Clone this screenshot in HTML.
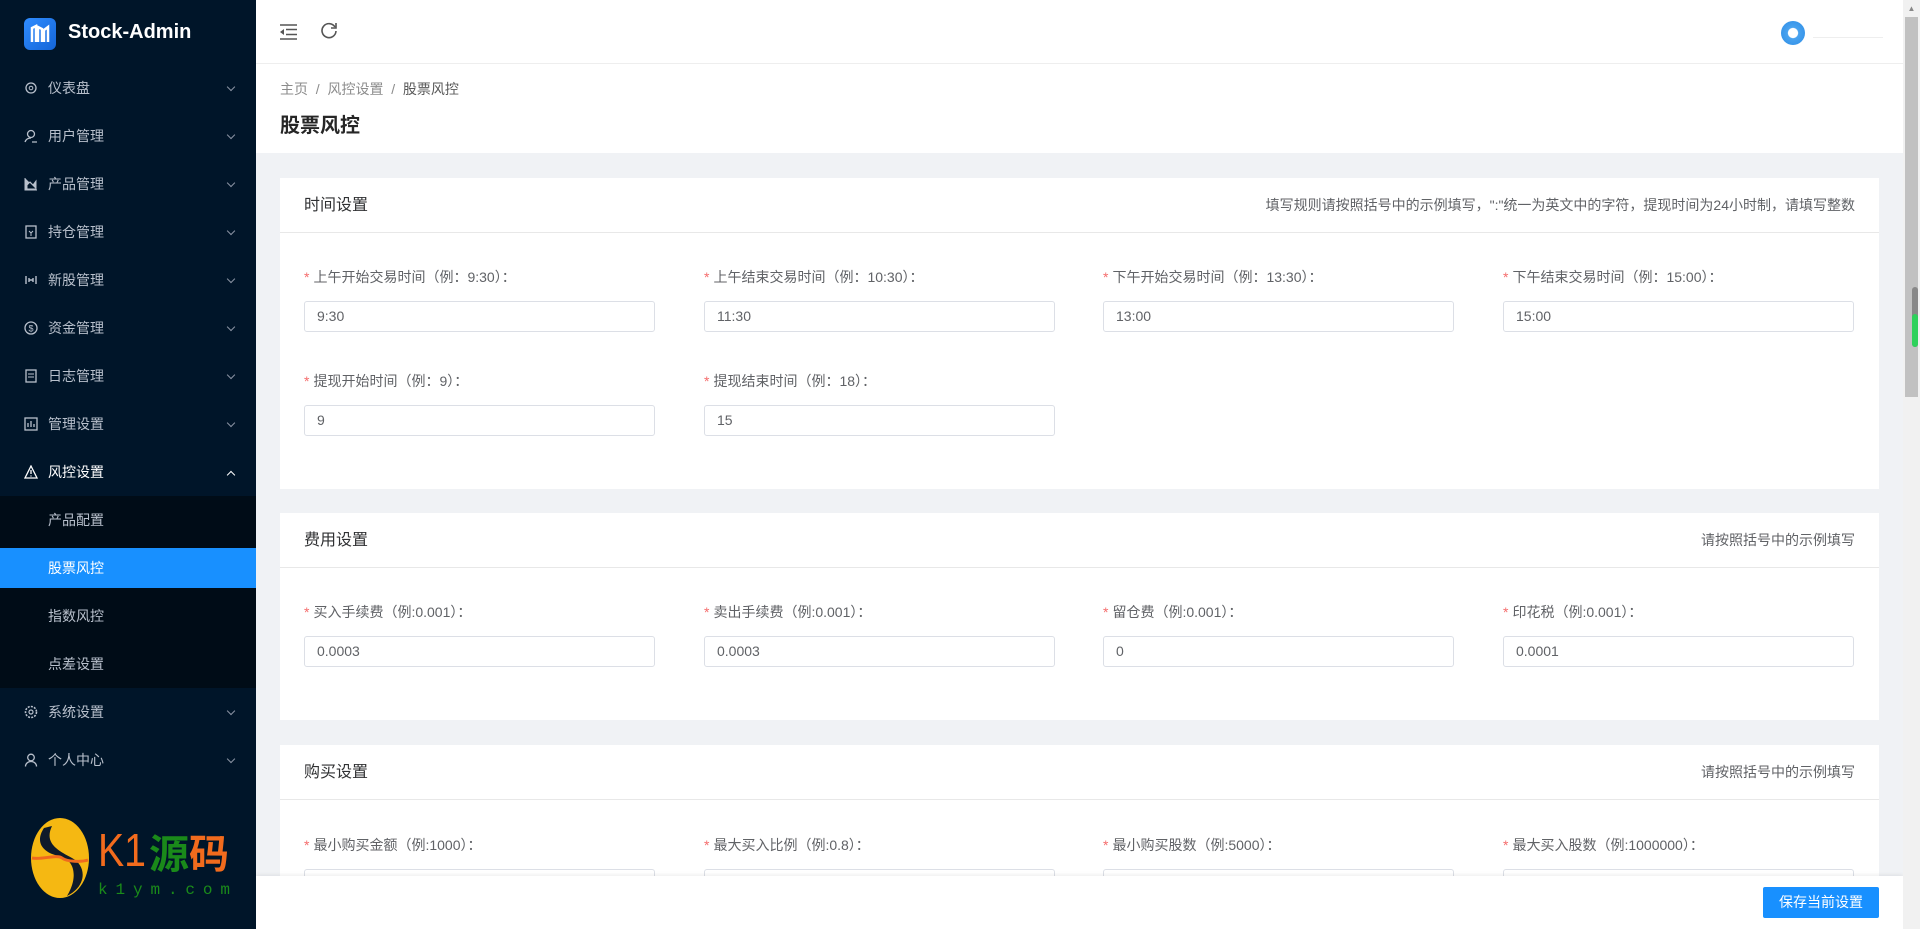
<!DOCTYPE html>
<html><head><meta charset="utf-8"><style>
*{box-sizing:border-box;margin:0;padding:0}
html,body{width:1920px;height:929px;overflow:hidden}
body{font-family:"Liberation Sans","Noto Sans CJK SC",sans-serif;background:#f0f2f5;position:relative}
.side{position:absolute;left:0;top:0;width:256px;height:929px;background:#001529;color:#b8c0cc;font-size:14px}
.logo{position:absolute;left:24px;top:18px;width:32px;height:32px;border-radius:6px;background:linear-gradient(135deg,#2f8cff,#1465d8)}
.brand{position:absolute;left:68px;top:21px;color:#fff;font-weight:bold;font-size:20px}
.mi{position:absolute;left:0;width:256px;height:48px;line-height:48px}
.mi .ic{position:absolute;left:24px;top:17px;width:14px;height:14px}
.mi .t{position:absolute;left:48px}
.mi .ar{position:absolute;left:228px;top:20px;width:6px;height:6px;border-right:1.5px solid #8a93a3;border-bottom:1.5px solid #8a93a3;transform:rotate(45deg)}
.sub{position:absolute;left:0;top:496px;width:256px;height:192px;background:#000c17}
.act{position:absolute;left:0;top:548px;width:256px;height:40px;background:#1890ff}
.hdr{position:absolute;left:256px;top:0;width:1647px;height:64px;background:#fff;border-bottom:1px solid #eee}
.ph{position:absolute;left:256px;top:64px;width:1647px;height:89px;background:#fff}
.bc{position:absolute;left:280px;top:79px;font-size:14px;color:#8c8c8c}
.bc b{font-weight:normal;color:#595959}
.ttl{position:absolute;left:280px;top:109px;font-size:20px;font-weight:bold;color:#262626}
.card{position:absolute;left:280px;width:1599px;background:#fff;overflow:hidden}
.card .h{height:55px;border-bottom:1px solid #e8e8e8;padding-left:24px;line-height:55px;font-size:16px;color:#303133;position:relative}
.card .h span{position:absolute;right:24px;top:0;font-size:14px;color:#606266}
.f{position:absolute;width:351px}
.f label{display:block;font-size:14px;color:#606266;height:20px;line-height:20px}
.f label i{color:#f56c6c;font-style:normal;margin-right:4px}
.f .in{margin-top:14px;height:31px;border:1px solid #dcdfe6;border-radius:3px;padding-left:12px;line-height:29px;font-size:14px;color:#606266;background:#fff}
.foot{position:absolute;left:256px;top:876px;width:1647px;height:53px;background:#fff;box-shadow:0 -1px 4px rgba(0,0,0,.08)}
.btn{position:absolute;left:1763px;top:887px;width:116px;height:31px;background:#1890ff;color:#fff;font-size:14px;text-align:center;line-height:31px;border-radius:2px}
.sb{position:absolute;left:1903px;top:0;width:17px;height:929px;background:#f1f1f1}
</style></head><body>
<div class="side">
<div class="logo"><svg width="32" height="32" viewBox="0 0 32 32"><path d="M8 24V10l4-2v16M14 24V9l4 2v13M20 24V12l4-3v15" stroke="#fff" stroke-width="2.5" fill="none"/></svg></div>
<div class="brand">Stock-Admin</div>
<div class="mi" style="top:64px"><svg class="ic" viewBox="0 0 14 14"><circle cx="7" cy="7" r="5" fill="none" stroke="#b8c0cc" stroke-width="1.3"/><circle cx="7" cy="7" r="1.8" fill="none" stroke="#b8c0cc"/></svg><span class="t">仪表盘</span><i class="ar"></i></div>
<div class="mi" style="top:112px"><svg class="ic" viewBox="0 0 14 14"><circle cx="7" cy="5" r="3.5" fill="none" stroke="#b8c0cc" stroke-width="1.3"/><path d="M1 13c1-3 3-4 6-4M8 13h5" stroke="#b8c0cc" stroke-width="1.3" fill="none"/></svg><span class="t">用户管理</span><i class="ar"></i></div>
<div class="mi" style="top:160px"><svg class="ic" viewBox="0 0 14 14"><path d="M1 1v12h12M3 12V8l3-3 3 3 3-4v8z" fill="#b8c0cc" stroke="#b8c0cc"/></svg><span class="t">产品管理</span><i class="ar"></i></div>
<div class="mi" style="top:208px"><svg class="ic" viewBox="0 0 14 14"><rect x="2" y="1" width="10" height="12" fill="none" stroke="#b8c0cc" stroke-width="1.3"/><path d="M5 6l2 2 2-2M7 8v3" stroke="#b8c0cc" fill="none"/></svg><span class="t">持仓管理</span><i class="ar"></i></div>
<div class="mi" style="top:256px"><svg class="ic" viewBox="0 0 14 14"><path d="M2 3v8M5 5v4M9 5v4M12 3v8M5 7h4" stroke="#b8c0cc" stroke-width="1.4"/></svg><span class="t">新股管理</span><i class="ar"></i></div>
<div class="mi" style="top:304px"><svg class="ic" viewBox="0 0 14 14"><circle cx="7" cy="7" r="6" fill="none" stroke="#b8c0cc" stroke-width="1.3"/><text x="7" y="10.5" font-size="9" fill="#b8c0cc" text-anchor="middle">$</text></svg><span class="t">资金管理</span><i class="ar"></i></div>
<div class="mi" style="top:352px"><svg class="ic" viewBox="0 0 14 14"><rect x="2" y="1" width="10" height="12" fill="none" stroke="#b8c0cc" stroke-width="1.3"/><path d="M4 5h6M4 8h6" stroke="#b8c0cc"/></svg><span class="t">日志管理</span><i class="ar"></i></div>
<div class="mi" style="top:400px"><svg class="ic" viewBox="0 0 14 14"><rect x="1" y="1" width="12" height="12" fill="none" stroke="#b8c0cc" stroke-width="1.3"/><path d="M4 10V6M7 10V4M10 10V7" stroke="#b8c0cc" stroke-width="1.3"/></svg><span class="t">管理设置</span><i class="ar"></i></div>
<div class="mi" style="top:448px;color:#fff"><svg class="ic" viewBox="0 0 14 14"><path d="M7 1L13 13H1z" fill="none" stroke="#fff" stroke-width="1.3"/><path d="M7 5v4M7 10.5v1" stroke="#fff" stroke-width="1.3"/></svg><span class="t">风控设置</span><i class="ar" style="transform:rotate(225deg);top:24px;border-color:#fff"></i></div>
<div class="sub"></div>
<div class="act"></div>
<div class="mi" style="top:496px"><span class="t">产品配置</span></div>
<div class="mi" style="top:544px;color:#fff"><span class="t">股票风控</span></div>
<div class="mi" style="top:592px"><span class="t">指数风控</span></div>
<div class="mi" style="top:640px"><span class="t">点差设置</span></div>
<div class="mi" style="top:688px"><svg class="ic" viewBox="0 0 14 14"><circle cx="7" cy="7" r="5.5" fill="none" stroke="#b8c0cc" stroke-width="1.6" stroke-dasharray="2 1.2"/><circle cx="7" cy="7" r="2" fill="none" stroke="#b8c0cc" stroke-width="1.2"/></svg><span class="t">系统设置</span><i class="ar"></i></div>
<div class="mi" style="top:736px"><svg class="ic" viewBox="0 0 14 14"><circle cx="7" cy="4.5" r="3.3" fill="none" stroke="#b8c0cc" stroke-width="1.3"/><path d="M1.5 13.5c0-3 2.5-5 5.5-5s5.5 2 5.5 5" fill="none" stroke="#b8c0cc" stroke-width="1.3"/></svg><span class="t">个人中心</span><i class="ar"></i></div>
<svg style="position:absolute;left:30px;top:818px" width="205" height="82" viewBox="0 0 205 82"><ellipse cx="30" cy="40" rx="29" ry="40" fill="#f5b812"/><path d="M14 10c-10 15 0 25 15 28s20 20 8 40c20-10 20-30 5-38S14 25 22 8z" fill="#0f1a2a"/><path d="M2 40c10 2 25-4 30 0s20 4 26 2" stroke="#f06a1e" stroke-width="3" fill="none"/><text x="68" y="48" font-size="46" fill="#f26b1d" font-family="Liberation Sans Narrow,Liberation Sans,sans-serif" textLength="48" lengthAdjust="spacingAndGlyphs">K1</text><text x="119" y="50" font-size="40" fill="#1a8a1a" font-weight="bold" font-family="Noto Sans CJK SC,sans-serif">源</text><text x="159" y="50" font-size="40" fill="#f26b1d" font-weight="bold" font-family="Noto Sans CJK SC,sans-serif">码</text><text x="68" y="76" font-size="16" fill="#1a8a1a" font-family="Liberation Mono,monospace" textLength="132" lengthAdjust="spacing">k1ym.com</text></svg>
</div>
<div class="hdr">
<svg style="position:absolute;left:23px;top:24px" width="18" height="16" viewBox="0 0 18 16"><path d="M1 1h17M7 5.5h11M7 10.5h11M1 15h17" stroke="#555" stroke-width="1.6"/><path d="M5 5l-4 3 4 3z" fill="#555"/></svg>
<svg style="position:absolute;left:65px;top:22px" width="17" height="17" viewBox="0 0 17 17"><path d="M14 5A7 7 0 1 0 15 9" stroke="#555" stroke-width="1.6" fill="none"/><path d="M15 1v5h-5" stroke="#555" stroke-width="1.6" fill="none"/></svg>
<div style="position:absolute;left:1525px;top:21px;width:24px;height:24px;border-radius:50%;background:radial-gradient(circle,#fff 28%,#4aa3ef 32%,#2b8ce6 100%)"></div>
<div style="position:absolute;left:1557px;top:37px;width:70px;height:1px;background:#eee"></div>
</div>
<div class="ph"></div>
<div class="bc">主页 &nbsp;/&nbsp; 风控设置 &nbsp;/&nbsp; <b>股票风控</b></div>
<div class="ttl">股票风控</div>

<div class="card" style="top:178px;height:311px"><div class="h">时间设置<span>填写规则请按照括号中的示例填写，":"统一为英文中的字符，提现时间为24小时制，请填写整数</span></div></div>
<div class="f" style="left:304px;top:267px"><label><i>*</i>上午开始交易时间（例：9:30）：</label><div class="in">9:30</div></div>
<div class="f" style="left:704px;top:267px"><label><i>*</i>上午结束交易时间（例：10:30）：</label><div class="in">11:30</div></div>
<div class="f" style="left:1103px;top:267px"><label><i>*</i>下午开始交易时间（例：13:30）：</label><div class="in">13:00</div></div>
<div class="f" style="left:1503px;top:267px"><label><i>*</i>下午结束交易时间（例：15:00）：</label><div class="in">15:00</div></div>
<div class="f" style="left:304px;top:371px"><label><i>*</i>提现开始时间（例：9）：</label><div class="in">9</div></div>
<div class="f" style="left:704px;top:371px"><label><i>*</i>提现结束时间（例：18）：</label><div class="in">15</div></div>

<div class="card" style="top:513px;height:207px"><div class="h">费用设置<span>请按照括号中的示例填写</span></div></div>
<div class="f" style="left:304px;top:602px"><label><i>*</i>买入手续费（例:0.001）：</label><div class="in">0.0003</div></div>
<div class="f" style="left:704px;top:602px"><label><i>*</i>卖出手续费（例:0.001）：</label><div class="in">0.0003</div></div>
<div class="f" style="left:1103px;top:602px"><label><i>*</i>留仓费（例:0.001）：</label><div class="in">0</div></div>
<div class="f" style="left:1503px;top:602px"><label><i>*</i>印花税（例:0.001）：</label><div class="in">0.0001</div></div>

<div class="card" style="top:745px;height:184px"><div class="h">购买设置<span>请按照括号中的示例填写</span></div></div>
<div class="f" style="left:304px;top:835px"><label><i>*</i>最小购买金额（例:1000）：</label><div class="in"></div></div>
<div class="f" style="left:704px;top:835px"><label><i>*</i>最大买入比例（例:0.8）：</label><div class="in"></div></div>
<div class="f" style="left:1103px;top:835px"><label><i>*</i>最小购买股数（例:5000）：</label><div class="in"></div></div>
<div class="f" style="left:1503px;top:835px"><label><i>*</i>最大买入股数（例:1000000）：</label><div class="in"></div></div>

<div class="foot"></div>
<div class="btn">保存当前设置</div>
<div class="sb"><div style="position:absolute;left:0;top:0;width:17px;height:17px;text-align:center;font-size:8px;color:#888;line-height:17px">▲</div><div style="position:absolute;left:2px;top:17px;width:13px;height:380px;background:#c1c1c1"></div><div style="position:absolute;left:9px;top:287px;width:6px;height:60px;background:#888;border-radius:3px"></div><div style="position:absolute;left:9px;top:314px;width:6px;height:33px;background:#2ed15b;border-radius:3px"></div></div>
</body></html>
